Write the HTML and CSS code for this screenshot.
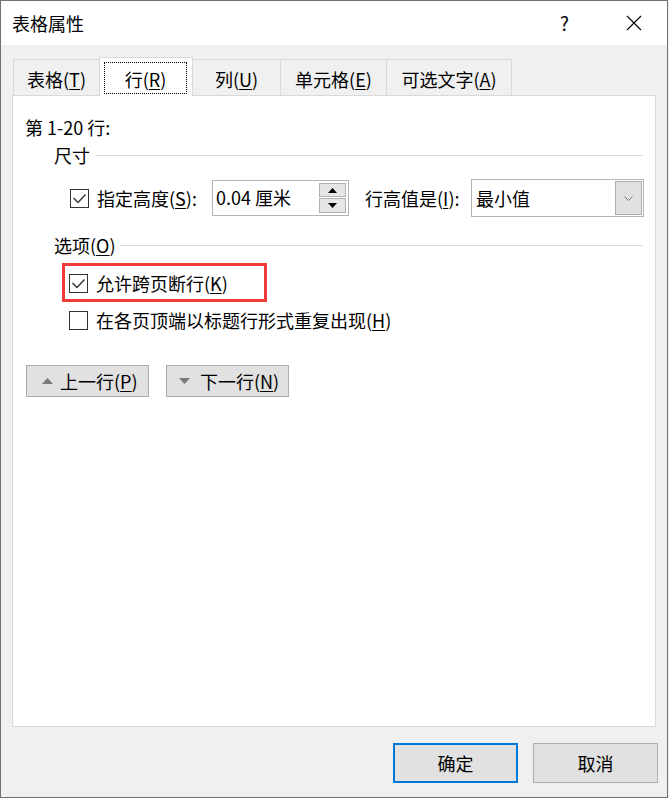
FILE: index.html
```html
<!DOCTYPE html>
<html lang="zh-CN">
<head>
<meta charset="utf-8">
<title>表格属性</title>
<link rel="stylesheet" href="styles.css">
</head>
<body>
<div class="window">
  <div class="titlebar">
    <span class="title">表格属性</span>
    <span class="help">?</span>
    <span class="close">
      <svg width="16" height="16" viewBox="0 0 16 16"><path d="M1 1 L15 15 M15 1 L1 15" stroke="#000" stroke-width="1.1" fill="none"/></svg>
    </span>
  </div>
  <div class="body">
    <div class="tabs">
      <div class="tab t1">表格(<u>T</u>)</div>
      <div class="tab active"><span class="focus">行(<u>R</u>)</span></div>
      <div class="tab t3">列(<u>U</u>)</div>
      <div class="tab t4">单元格(<u>E</u>)</div>
      <div class="tab t5">可选文字(<u>A</u>)</div>
    </div>
    <div class="panel">
      <div class="rows-label">第 1-20 行:</div>
      <div class="section sec-size"><span class="sec-text">尺寸</span><span class="rule"></span></div>
      <div class="size-row">
        <span class="check"><svg width="17" height="17" viewBox="0 0 17 17"><path d="M2.5 8 L7 12.5 L14.5 4.5" stroke="#333" stroke-width="1.4" fill="none"/></svg></span>
        <span class="lbl">指定高度(<u>S</u>):</span>
        <div class="spin">
          <span class="val">0.04 厘米</span>
          <div class="spin-btns">
            <span class="sb up"><svg width="9" height="5" viewBox="0 0 9 5"><path d="M0 5 L4.5 0 L9 5 Z" fill="#000"/></svg></span>
            <span class="sb down"><svg width="9" height="5" viewBox="0 0 9 5"><path d="M0 0 L4.5 5 L9 0 Z" fill="#000"/></svg></span>
          </div>
        </div>
        <span class="lbl2">行高值是(<u>I</u>):</span>
        <div class="combo">
          <span class="combo-val">最小值</span>
          <span class="combo-btn"><svg width="9" height="5" viewBox="0 0 9 5"><path d="M0.5 0.5 L4.5 4.5 L8.5 0.5" stroke="#777" stroke-width="1" fill="none"/></svg></span>
        </div>
      </div>
      <div class="section sec-opts"><span class="sec-text">选项(<u>O</u>)</span><span class="rule"></span></div>
      <div class="opt highlight">
        <span class="check"><svg width="17" height="17" viewBox="0 0 17 17"><path d="M2.5 8 L7 12.5 L14.5 4.5" stroke="#333" stroke-width="1.4" fill="none"/></svg></span>
        <span class="opt-text">允许跨页断行(<u>K</u>)</span>
      </div>
      <div class="opt plain">
        <span class="check"></span>
        <span class="opt-text">在各页顶端以标题行形式重复出现(<u>H</u>)</span>
      </div>
      <div class="nav">
        <button class="navbtn prev"><svg width="11" height="6" viewBox="0 0 11 6"><path d="M0 6 L5.5 0 L11 6 Z" fill="#7a7a7a"/></svg><span>上一行(<u>P</u>)</span></button>
        <button class="navbtn next"><svg width="11" height="6" viewBox="0 0 11 6"><path d="M0 0 L5.5 6 L11 0 Z" fill="#7a7a7a"/></svg><span>下一行(<u>N</u>)</span></button>
      </div>
    </div>
    <div class="footer">
      <button class="dlgbtn ok">确定</button>
      <button class="dlgbtn">取消</button>
    </div>
  </div>
</div>
</body>
</html>
```
FILE: styles.css
```css
* { box-sizing: border-box; }
html, body { margin: 0; padding: 0; background: #f0f0f0; }
body {
  font-family: "Noto Sans CJK SC", "Noto Sans", sans-serif;
  font-size: 18px;
  color: #000;
  line-height: 24px;
}
u { text-decoration: underline; text-underline-offset: 2px; text-decoration-thickness: 1px; }

.window {
  width: 668px;
  height: 798px;
  border: 1px solid #707070;
  background: #f0f0f0;
  display: flex;
  flex-direction: column;
}

.titlebar {
  height: 44px;
  background: #fff;
  display: flex;
  align-items: center;
  padding-left: 11px;
  padding-right: 25px;
  flex: none;
}
.title { flex: 1; }
.help { width: 8px; margin-right: 58px; font-size: 19px; }
.close { display: flex; width: 16px; height: 16px; }

.body {
  flex: 1;
  padding: 12px 11px 0 11px;
  display: flex;
  flex-direction: column;
}

.tabs {
  height: 38px;
  display: flex;
  align-items: flex-end;
  padding-left: 1px;
  flex: none;
}
.tab {
  height: 36px;
  display: flex;
  align-items: center;
  justify-content: center;
  padding-top: 2px;
  border-top: 1px solid #d9d9d9;
  border-right: 1px solid #d9d9d9;
  background: #f0f0f0;
}
.t1 { width: 86px; border-left: 1px solid #d9d9d9; border-right: none; }
.t3 { width: 88px; }
.t4 { width: 106px; }
.t5 { width: 125px; }
.tab.active {
  width: 94px;
  height: 39px;
  margin-bottom: -1px;
  border: 1px solid #d9d9d9;
  border-bottom: none;
  background: #fff;
  position: relative;
  z-index: 1;
  padding: 4px 5px 2px 4px;
  align-items: stretch;
}
.focus {
  flex: 1;
  border: 1px dotted #000;
  display: flex;
  align-items: center;
  justify-content: center;
  padding-top: 1px;
}

.panel {
  width: 644px;
  height: 632px;
  border: 1px solid #d9d9d9;
  background: #fff;
  flex: none;
}

.rows-label { margin: 19px 0 0 12px; height: 24px; }

.section {
  display: flex;
  align-items: center;
  height: 24px;
  padding-left: 41px;
  padding-right: 12px;
}
.sec-size { margin-top: 4px; }
.sec-opts { margin-top: 17px; }
.rule { flex: 1; height: 1px; background: #dcdcdc; margin-left: 5px; }
.sec-opts .rule { margin-left: 4px; }

.check {
  width: 19px;
  height: 19px;
  border: 1px solid #333;
  background: #fff;
  display: flex;
  align-items: center;
  justify-content: center;
  flex: none;
}

.size-row {
  margin-top: 13px;
  height: 36px;
  display: flex;
  align-items: center;
  padding-left: 57px;
}
.lbl { width: 115px; margin-left: 8px; flex: none; }
.spin {
  width: 137px;
  height: 36px;
  border: 1px solid #b4b4b4;
  background: #fff;
  display: flex;
  align-items: center;
  flex: none;
}
.val { flex: 1; padding-left: 3px; padding-bottom: 2px; }
.spin-btns {
  align-self: flex-start;
  margin-top: 2px;
  margin-right: 2px;
  display: flex;
  flex-direction: column;
  gap: 1px;
}
.sb {
  width: 27px;
  background: #e6e6e6;
  border: 1px solid #b0b0b0;
  display: flex;
  align-items: center;
  justify-content: center;
}
.sb.up { height: 14px; }
.sb.down { height: 15px; }

.lbl2 { width: 106px; margin-left: 16px; flex: none; }
.combo {
  width: 173px;
  height: 38px;
  border: 1px solid #b4b4b4;
  background: #fff;
  display: flex;
  align-items: center;
  flex: none;
}
.combo-val { flex: 1; padding-left: 4px; }
.combo-btn {
  align-self: stretch;
  margin: 1px 1px 1px 0;
  width: 27px;
  background: #e1e1e1;
  border: 1px solid #adadad;
  display: flex;
  align-items: center;
  justify-content: center;
}

.opt {
  display: flex;
  align-items: center;
}
.opt-text { margin-left: 8px; }
.highlight {
  margin-top: 6px;
  margin-left: 49px;
  width: 205px;
  height: 39px;
  border: 3px solid #f03a3a;
  padding-left: 4px;
  padding-top: 1px;
}
.plain {
  margin-left: 56px;
  height: 36px;
}

.nav {
  margin-top: 27px;
  margin-left: 13px;
  display: flex;
  gap: 17px;
}
.navbtn {
  width: 123px;
  height: 32px;
  margin: 0;
  padding: 0;
  border: 1px solid #adadad;
  background: #e1e1e1;
  font-family: inherit;
  font-size: 18px;
  line-height: 24px;
  color: #000;
  display: flex;
  align-items: center;
}
.navbtn.prev { padding-left: 15px; gap: 7px; }
.navbtn.next { padding-left: 12px; gap: 10px; }

.footer {
  margin-top: 16px;
  margin-right: -2px;
  display: flex;
  justify-content: flex-end;
  gap: 15px;
}
.dlgbtn {
  width: 125px;
  height: 40px;
  margin: 0;
  padding: 0;
  border: 1px solid #adadad;
  background: #e1e1e1;
  font-family: inherit;
  font-size: 18px;
  line-height: 24px;
  color: #000;
}
.dlgbtn.ok { border: 2px solid #0078d7; }
```
